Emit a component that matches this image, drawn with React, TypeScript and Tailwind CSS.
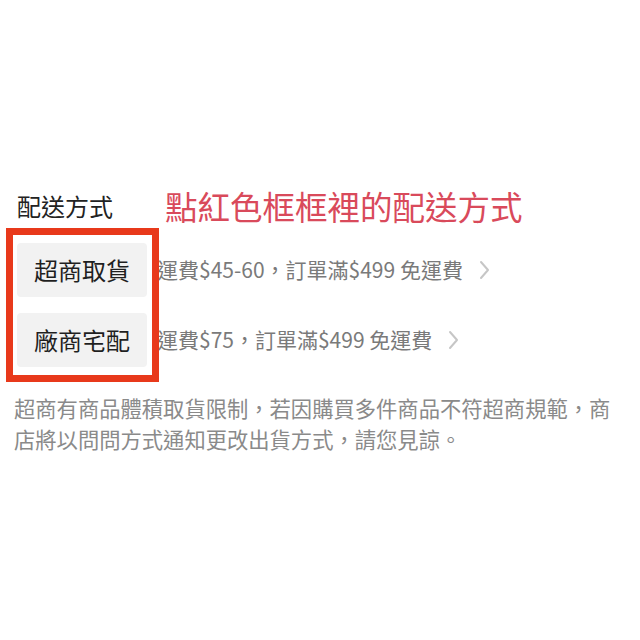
import React from "react";

const rows = [
  { label: "超商取貨", fee: "運費$45-60，訂單滿$499 免運費" },
  { label: "廠商宅配", fee: "運費$75，訂單滿$499 免運費" },
];

function Chevron() {
  return (
    <svg width="11" height="20" viewBox="0 0 11 20" fill="none" className="ml-[16px]">
      <path d="M2 2l7 8-7 8" stroke="#c6c6c6" strokeWidth="2" strokeLinecap="round" strokeLinejoin="round" />
    </svg>
  );
}

export default function App() {
  return (
    <div
      className="relative h-[640px] w-[640px] overflow-hidden bg-white"
      style={{ fontFamily: '"Noto Sans CJK TC", "Noto Sans", sans-serif' }}
    >
      <div className="pt-[184px]">
        <div className="flex items-center pl-[17px]">
          <span className="text-[24px] leading-[40px] text-[#222]">配送方式</span>
          <span className="ml-[52px] text-[32.5px] leading-[44px] text-[#d94a5b]">
            點紅色框框裡的配送方式
          </span>
        </div>

        <div className="mt-[15px] flex flex-col gap-[16px] pl-[17px]">
          {rows.map((r) => (
            <div key={r.label} className="flex items-center">
              <div className="flex h-[54px] w-[130px] items-center justify-center rounded-[4px] bg-[#f2f2f2] text-[24px] text-[#1f1f1f]">
                {r.label}
              </div>
              <span className="ml-[10px] text-[21px] text-[#7a7a7a]">{r.fee}</span>
              <Chevron />
            </div>
          ))}
        </div>

        <p className="mt-[25px] whitespace-nowrap pl-[14px] text-[21.3px] leading-[31px] text-[#8a8a8a]">
          超商有商品體積取貨限制，若因購買多件商品不符超商規範，商
          <br />
          店將以問問方式通知更改出貨方式，請您見諒。
        </p>
      </div>

      <div className="absolute left-[6px] top-[228px] h-[154px] w-[153px] border-[7px] border-[#e8391b]" />
    </div>
  );
}
